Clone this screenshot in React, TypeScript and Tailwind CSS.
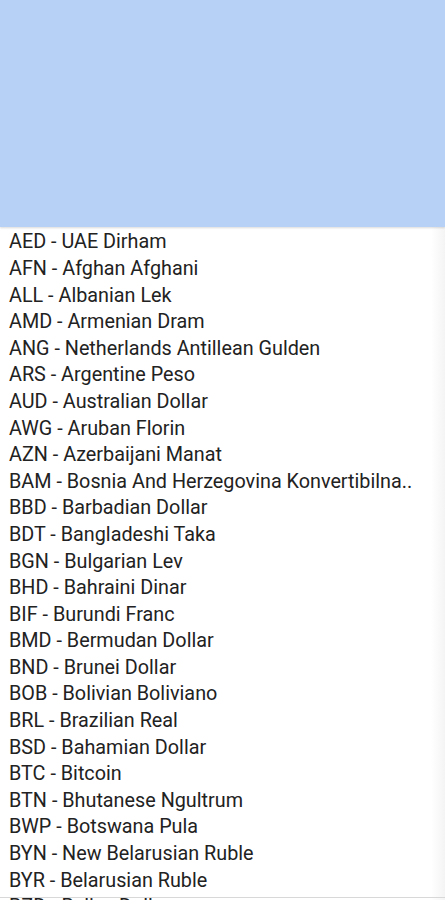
import React from "react";

const items = [
  "AED - UAE Dirham",
  "AFN - Afghan Afghani",
  "ALL - Albanian Lek",
  "AMD - Armenian Dram",
  "ANG - Netherlands Antillean Gulden",
  "ARS - Argentine Peso",
  "AUD - Australian Dollar",
  "AWG - Aruban Florin",
  "AZN - Azerbaijani Manat",
  "BAM - Bosnia And Herzegovina Konvertibilna..",
  "BBD - Barbadian Dollar",
  "BDT - Bangladeshi Taka",
  "BGN - Bulgarian Lev",
  "BHD - Bahraini Dinar",
  "BIF - Burundi Franc",
  "BMD - Bermudan Dollar",
  "BND - Brunei Dollar",
  "BOB - Bolivian Boliviano",
  "BRL - Brazilian Real",
  "BSD - Bahamian Dollar",
  "BTC - Bitcoin",
  "BTN - Bhutanese Ngultrum",
  "BWP - Botswana Pula",
  "BYN - New Belarusian Ruble",
  "BYR - Belarusian Ruble",
  "BZD - Belize Dollar",
  "CAD - Canadian Dollar",
];

export default function App() {
  return (
    <div className="w-[445px] h-[900px] overflow-hidden bg-white flex flex-col" style={{ fontFamily: "Roboto, 'Noto Sans', sans-serif" }}>
      <div className="h-[227px] shrink-0 bg-[#b7d0f6] shadow-[0_1px_2px_rgba(0,0,0,0.15)] relative z-10" />
      <div className="relative flex-1 overflow-hidden">
        <div className="flex flex-col pt-[2px]">
          {items.map((t) => (
            <div key={t} className="h-[26.6px] shrink-0 flex items-center pl-[9px] text-[19.8px] leading-none text-[#222222] whitespace-nowrap">
              {t}
            </div>
          ))}
        </div>
        <div className="absolute top-0 right-0 bottom-0 w-[14px] bg-gradient-to-r from-white/0 to-[#f4f4f4]" />
        <div className="absolute left-0 right-0 top-[670px] h-[1px] bg-[#d8d8d8]" />
      </div>
    </div>
  );
}
